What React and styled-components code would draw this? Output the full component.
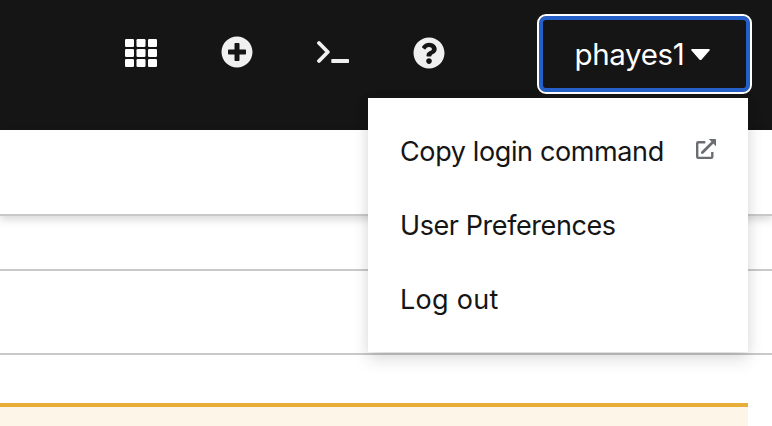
import React from "react";
import styled, { createGlobalStyle } from "styled-components";
import { FaPlusCircle, FaQuestionCircle } from "react-icons/fa";

const GlobalStyle = createGlobalStyle`
  * { box-sizing: border-box; }
  body {
    margin: 0;
    overflow: hidden;
    background: #fff;
    color: #151515;
    font-family: Inter, "Liberation Sans", sans-serif;
  }
`;

const Page = styled.div`
  width: 772px;
  height: 426px;
  overflow: hidden;
`;

const Masthead = styled.header`
  display: flex;
  align-items: flex-start;
  justify-content: flex-end;
  height: 130px;
  padding: 14px 20px 0 0;
  background: #151515;
`;

const Tools = styled.nav`
  display: flex;
  align-items: center;
  height: 78px;
  margin-right: 60px;
`;

const ToolButton = styled.button`
  display: flex;
  align-items: center;
  justify-content: center;
  width: 96px;
  height: 78px;
  padding: 0 0 ${(p) => p.$lift || 0}px 0;
  border: 0;
  background: none;
  color: ${(p) => (p.$bright ? "#fff" : "#f0f0f0")};
  svg { display: block; }
`;

const UserArea = styled.div`
  position: relative;
`;

const UserToggle = styled.button`
  display: flex;
  align-items: center;
  width: 215px;
  height: 80px;
  padding: 0 0 0 29px;
  border: 2px solid #fff;
  border-radius: 9px;
  box-shadow: inset 0 0 0 4px #2460c8;
  background: #151515;
  color: #fff;
  font: 400 29.5px/1 Inter, "Liberation Sans", sans-serif;
  letter-spacing: -0.35px;
  svg { margin-top: 2px; }
`;

const UserName = styled.span`
  width: 123px;
  padding-top: 2px;
  white-space: nowrap;
`;

const Menu = styled.ul`
  position: absolute;
  z-index: 2;
  top: 84px;
  right: 4px;
  width: 380px;
  margin: 0;
  padding: 16px 0;
  list-style: none;
  background: #fff;
  box-shadow: 0 8px 16px rgba(3, 3, 3, 0.12), 0 0 12px rgba(3, 3, 3, 0.06);
`;

const MenuItem = styled.li`
  display: flex;
  align-items: center;
  justify-content: space-between;
  height: 74px;
  padding: 2px 32px 0;
  font-size: 27px;
  font-weight: 380;
  line-height: 36px;
  letter-spacing: ${(p) => p.$tracking}px;
  white-space: nowrap;
  svg { display: block; margin-top: -6px; }
`;

const Band = styled.section`
  height: ${(p) => p.$height}px;
  border-bottom: 2px solid #c9c9c9;
  box-shadow: ${(p) => (p.$raised ? "0 4px 8px rgba(3, 3, 3, 0.15)" : "none")};
`;

const Alert = styled.section`
  width: 748px;
  height: 23px;
  margin-top: 48px;
  border-top: 4px solid #e8ad38;
  background: #fdf6e8;
`;

function GridIcon() {
  return (
    <svg width="32" height="28" viewBox="0 0 32 28" fill="currentColor">
      {[0, 10, 20].map((y) =>
        [0, 11.5, 23].map((x) => <rect key={`${x}-${y}`} x={x} y={y} width="9" height="8" rx="1.3" />)
      )}
    </svg>
  );
}

function TerminalIcon() {
  return (
    <svg width="32" height="24" viewBox="0 0 32 24" fill="none" stroke="currentColor">
      <path d="M2 3L10.8 12L2 21" strokeWidth="3.8" strokeLinecap="round" strokeLinejoin="round" />
      <rect x="14.3" y="19" width="17.7" height="4" rx="0.8" fill="currentColor" stroke="none" />
    </svg>
  );
}

function ExternalLinkIcon() {
  return (
    <svg width="20" height="21" viewBox="0 0 20 21" fill="none" stroke="#6a6e73">
      <path d="M9.3 3.2H2.2Q1.2 3.2 1.2 4.3V17.8Q1.2 18.9 2.2 18.9H15.3Q16.3 18.9 16.3 17.8V13" strokeWidth="2.4" />
      <path d="M6.4 13.6L16.5 3.6" strokeWidth="2.8" strokeLinecap="round" />
      <path d="M12.8 0H19.2Q20 0 20 .8V7.2Z" fill="#6a6e73" stroke="none" />
    </svg>
  );
}

function CaretIcon() {
  return (
    <svg width="19" height="12" viewBox="0 0 19 12" fill="currentColor">
      <path d="M1 0H18Q19.4.5 18.3 1.8L10.6 10.5Q9.5 11.5 8.4 10.5L.7 1.8Q-.4.5 1 0Z" />
    </svg>
  );
}

export default function App() {
  return (
    <>
      <GlobalStyle />
      <Page>
        <Masthead>
          <Tools>
            <ToolButton $bright aria-label="Applications"><GridIcon /></ToolButton>
            <ToolButton $lift={2} aria-label="Create"><FaPlusCircle size={32} /></ToolButton>
            <ToolButton $lift={2} aria-label="Terminal"><TerminalIcon /></ToolButton>
            <ToolButton aria-label="Help"><FaQuestionCircle size={32} /></ToolButton>
          </Tools>
          <UserArea>
            <UserToggle>
              <UserName>phayes1</UserName>
              <CaretIcon />
            </UserToggle>
            <Menu>
              <MenuItem $tracking={-0.38}>Copy login command <ExternalLinkIcon /></MenuItem>
              <MenuItem $tracking={-0.42}>User Preferences</MenuItem>
              <MenuItem $tracking={0.3}>Log out</MenuItem>
            </Menu>
          </UserArea>
        </Masthead>
        <Band $height={86} $raised />
        <Band $height={55} />
        <Band $height={84} />
        <Alert />
      </Page>
    </>
  );
}
